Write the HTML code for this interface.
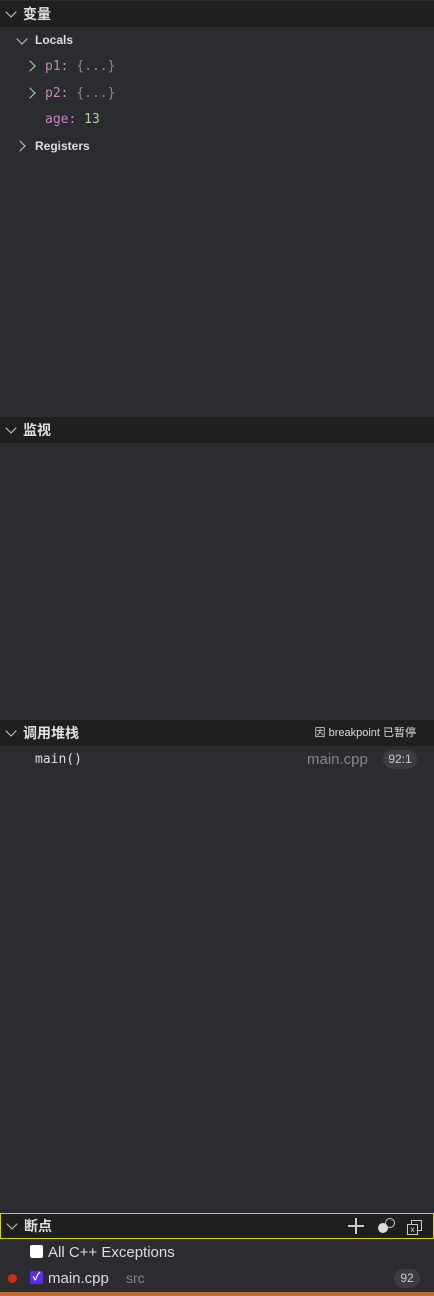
<!DOCTYPE html><html><head><style>
body{margin:0;width:434px;height:1296px;background:#2b2c2f;font-family:"Liberation Sans","Noto Sans CJK SC",sans-serif;color:#ccc;position:relative;overflow:hidden}
.h{position:absolute;left:0;width:434px;height:26px;background:#1f1f20;font-size:14px;font-weight:bold;color:#e0e0e0;line-height:27px}
.h .t{position:absolute;left:23px}
.ch{position:absolute;width:7px;height:7px;border-right:1.2px solid #ccc;border-bottom:1.2px solid #ccc}
.dn{transform:rotate(45deg)}.rt{transform:rotate(-45deg)}
.r{position:absolute;left:0;width:434px;height:26px;line-height:27px;font-size:13px}
.m{font-family:"DejaVu Sans Mono","Liberation Mono",monospace;font-size:13px}
</style></head><body>
<div class="h" style="top:1px"><span class="ch dn" style="left:7px;top:7px"></span><span class="t">变量</span></div>
<div class="r" style="top:27px"><span class="ch dn" style="left:18px;top:8px"></span><b style="position:absolute;left:35px;font-size:12px;color:#ddd">Locals</b></div>
<div class="r m" style="top:53px"><span class="ch rt" style="left:26px;top:9px"></span><span style="position:absolute;left:45px"><span style="color:#c586c0">p1:</span> <span style="color:#888">{...}</span></span></div>
<div class="r m" style="top:80px"><span class="ch rt" style="left:26px;top:9px"></span><span style="position:absolute;left:45px"><span style="color:#c586c0">p2:</span> <span style="color:#888">{...}</span></span></div>
<div class="r m" style="top:106px"><span style="position:absolute;left:45px"><span style="color:#c586c0">age:</span> <span style="color:#b5cea8">13</span></span></div>
<div class="r" style="top:133px"><span class="ch rt" style="left:16px;top:9px"></span><b style="position:absolute;left:35px;font-size:12px;color:#ddd">Registers</b></div>
<div class="h" style="top:417px"><span class="ch dn" style="left:7px;top:7px"></span><span class="t">监视</span></div>
<div class="h" style="top:720px"><span class="ch dn" style="left:7px;top:7px"></span><span class="t">调用堆栈</span><span style="position:absolute;right:18px;font-size:11px;font-weight:normal;color:#ddd">因 breakpoint 已暂停</span></div>
<div class="r m" style="top:746px"><span style="position:absolute;left:35px;color:#ddd">main()</span><span style="position:absolute;left:307px;font-family:'Liberation Sans',sans-serif;font-size:15px;color:#888">main.cpp</span><span style="position:absolute;left:383px;top:4px;height:19px;line-height:19px;width:34px;text-align:center;border-radius:10px;background:#3c3d40;font-family:'Liberation Sans',sans-serif;font-size:12px;color:#ccc">92:1</span></div>
<div class="h" style="top:1213px;height:24px;border:1px solid #d7d700;width:432px;line-height:25px"><span class="ch dn" style="left:7px;top:6px"></span><span class="t">断点</span>
<span style="position:absolute;left:347px;top:4px;width:16px;height:16px"><span style="position:absolute;left:7px;top:0;width:1.5px;height:16px;background:#ccc"></span><span style="position:absolute;left:0;top:7px;width:16px;height:1.5px;background:#ccc"></span></span>
<span style="position:absolute;left:377px;top:9px;width:10px;height:10px;border-radius:50%;background:#ddd"></span><span style="position:absolute;left:384px;top:4px;width:8px;height:8px;border-radius:50%;border:1.5px solid #ccc"></span>
<span style="position:absolute;left:410px;top:6px;width:9px;height:9px;border:1.5px solid #ccc"></span><span style="position:absolute;left:406px;top:10px;width:9px;height:9px;border:1.5px solid #ccc;background:#1f1f20;font-size:8px;line-height:9px;text-align:center;font-weight:normal">x</span></div>
<div class="r" style="top:1239px;font-size:15px"><span style="position:absolute;left:30px;top:6px;width:13px;height:13px;background:#fff;border-radius:2px"></span><span style="position:absolute;left:48px;color:#ddd">All C++ Exceptions</span></div>
<div class="r" style="top:1265px;font-size:15px"><span style="position:absolute;left:8px;top:9px;width:9px;height:9px;border-radius:50%;background:#d42a1a"></span><span style="position:absolute;left:30px;top:6px;width:13px;height:13px;background:#5b2ee6;border-radius:2px;color:#fff;font-size:11px;line-height:13px;text-align:center;font-weight:bold">✓</span><span style="position:absolute;left:48px;color:#ddd">main.cpp</span><span style="position:absolute;left:126px;font-size:14px;color:#888">src</span><span style="position:absolute;left:394px;top:4px;width:26px;height:19px;line-height:19px;text-align:center;border-radius:10px;background:#3c3d40;font-size:12px">92</span></div>
<div style="position:absolute;left:0;top:1292px;width:434px;height:4px;background:#c26a2c"></div>
</body></html>
